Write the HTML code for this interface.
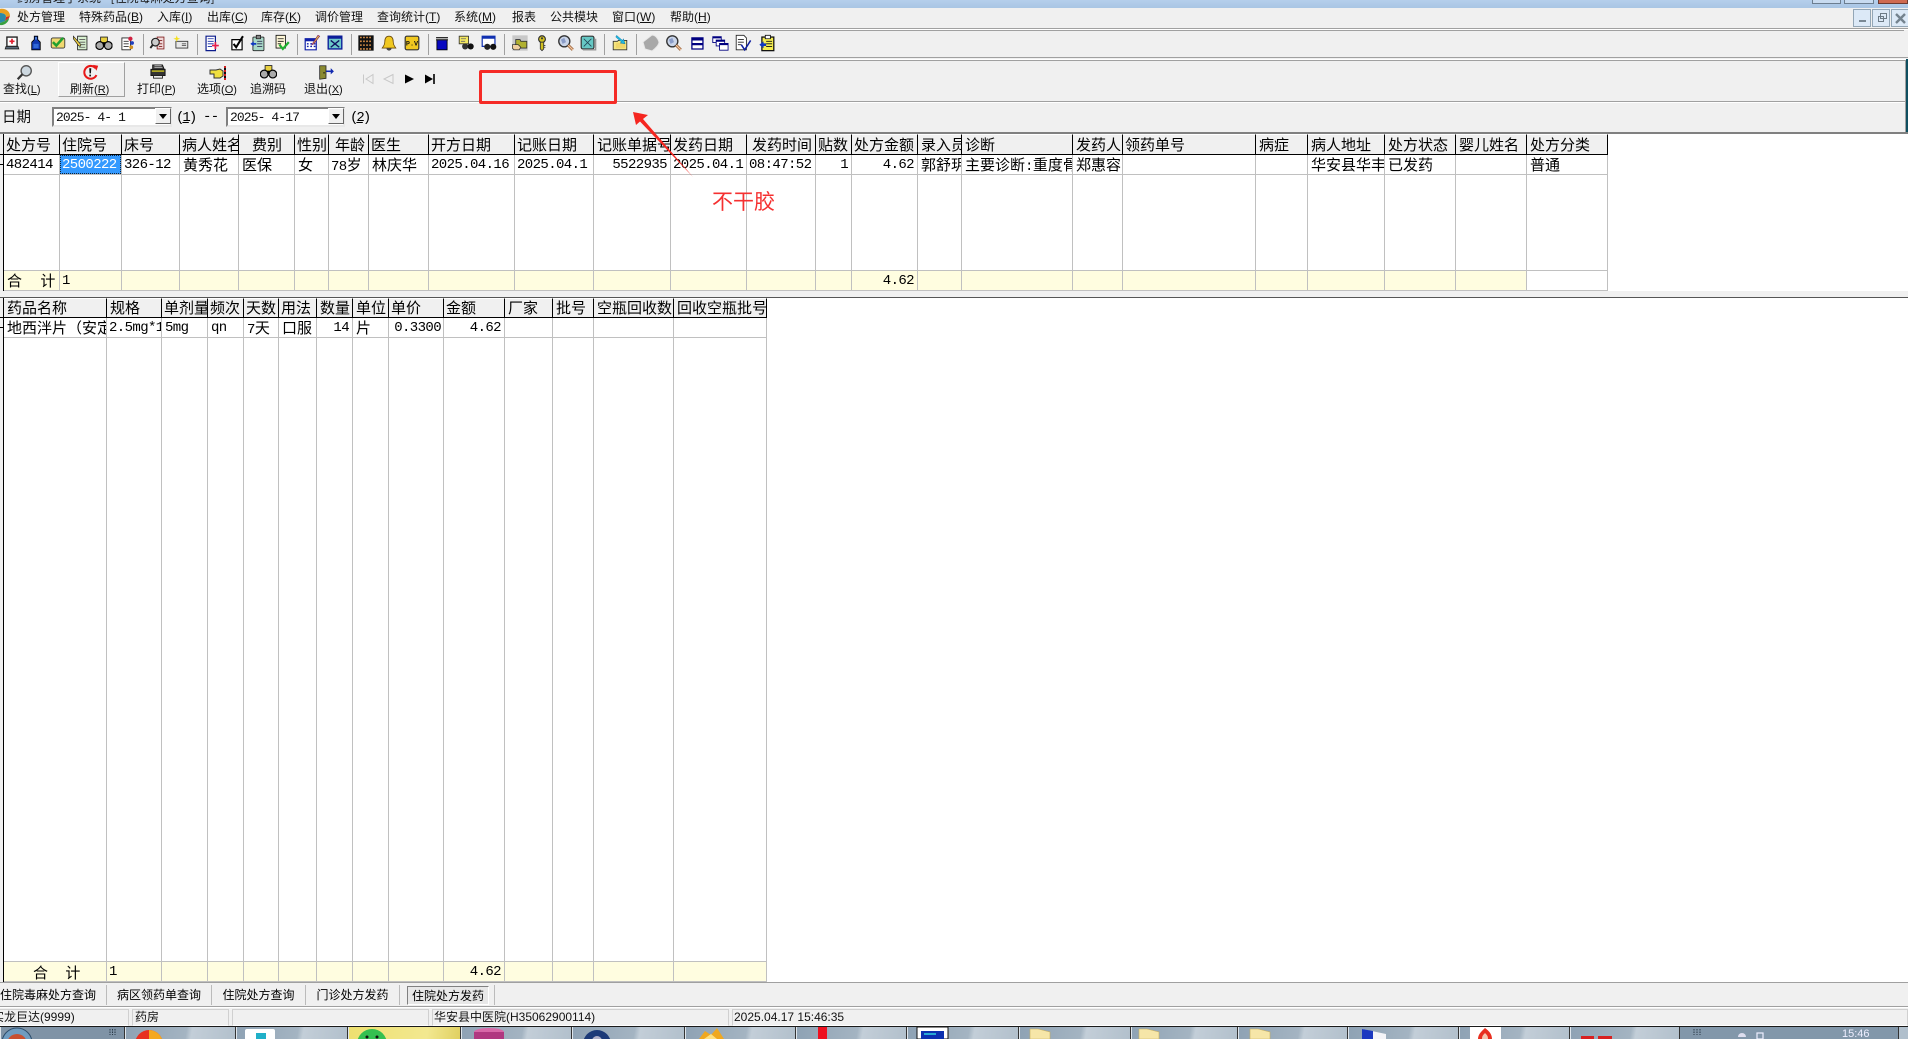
<!DOCTYPE html>
<html lang="zh"><head><meta charset="utf-8"><title>药房管理子系统</title>
<style>
html,body{margin:0;padding:0;background:#fff;width:1908px;height:1039px;overflow:hidden}
#r{position:relative;width:1908px;height:1039px;overflow:hidden;background:#fff;font:15px "WenQuanYi Zen Hei","Noto Sans CJK SC",sans-serif;color:#000}
#r div,#r span.a,#r svg.ic,#r svg.p{position:absolute}
u{text-decoration:underline}
.n{font:14px "Liberation Mono",monospace;letter-spacing:-.6px}
.m{top:7px;height:19px;line-height:19px;font-size:12px;white-space:nowrap;color:#111}
.m em{font:12px "Liberation Sans",sans-serif}
.ic{top:33px;width:20px;height:20px;transform:scale(.85)}
.l{background:#a0a0a0}
.b{background:#000}
.g{background:#c0c0c0}
.h,.c{overflow:hidden;white-space:nowrap;box-sizing:border-box;padding-left:2px}
.h{height:20px;line-height:20px;background:#f0f0f0;border-right:1px solid #000;border-top:1px solid #fff;font-size:15px;color:#000}
.h2{line-height:18px}
.c{height:19px;line-height:20px;font-size:15px;color:#000}
.c.n{font:14px/20px "Liberation Mono",monospace}
.rt{text-align:right;padding:0 3px 0 0}
.bt{font-size:12px;white-space:nowrap;height:15px;line-height:15px;color:#111}
.bt em{font:11px "Liberation Sans",sans-serif}
.tab{top:985px;height:20px;line-height:20px;font-size:12px;text-align:center;white-space:nowrap;overflow:hidden;border-right:1px solid #bbb;box-sizing:border-box}
.st{top:1009px;height:17px;line-height:14px;font:12px/14px "Liberation Sans","WenQuanYi Zen Hei",sans-serif;box-sizing:border-box;border:1px solid #d0d0d0;border-bottom-color:#fff;white-space:nowrap;overflow:hidden;padding-left:1px;color:#111}
.tb{top:1027px;height:12px;border-right:1px solid #333;border-left:1px solid #dfe6ec;box-sizing:border-box;background:linear-gradient(100deg,#8ea2b4 0%,#a4b4c2 55%,#c3ced8 60%,#b2c0cc 100%)}
.cb{background:#fff;box-sizing:border-box;border:2px solid;border-color:#808080 #e8e8e8 #e8e8e8 #808080;height:20px;top:107px;font:13px "Liberation Mono",monospace;letter-spacing:-.9px;line-height:17px;padding-left:2px;white-space:pre;color:#111}
.cbb{top:108px;width:16px;height:16px;background:#f0f0f0;border:1px solid;border-color:#fff #666 #666 #fff;box-sizing:border-box}
.cbb:after{content:"";position:absolute;left:3px;top:5px;border:4px solid transparent;border-top:5px solid #000;border-bottom:0}
.ctl{top:9px;width:18px;height:18px;background:#dce9f7;border:1px solid #93a6b6;box-sizing:border-box}
</style></head><body><div id="r">
<svg width="0" height="0" style="position:absolute"><defs>
<symbol id="mag" viewBox="0 0 20 20"><circle cx="8" cy="8" r="6.5" fill="#c9d4e8" stroke="#333" stroke-width="1.6"/><path d="M4 6 8 4l2 5-4 2z" fill="#8a9cc8"/><path d="M12.5 12.5 18 18" stroke="#a06840" stroke-width="3.4"/><path d="M12.5 12.5 18 18" stroke="#f4c8a0" stroke-width="1.4"/></symbol>
<symbol id="bino" viewBox="0 0 20 20"><path d="M6 3h8v7H6z" fill="#e8d040" stroke="#222"/><circle cx="5" cy="13" r="4.6" fill="#aaa" stroke="#000" stroke-width="1.4"/><circle cx="15" cy="13" r="4.6" fill="#aaa" stroke="#000" stroke-width="1.4"/><path d="M8.5 9h3v4h-3z" fill="#000"/></symbol>
</defs></svg>

<!-- chrome -->
<div style="left:0;top:0;width:1908px;height:134px;background:#f0f0f0"></div>
<div style="left:0;top:0;width:1908px;height:8px;background:linear-gradient(#b5cfec,#a9c5e4);overflow:hidden"><div style="left:17px;top:-10px;font-size:12px;line-height:16px;color:#1a1a1a;white-space:nowrap">药房管理子系统 - [住院毒麻处方查询]</div></div>
<div style="left:1812px;top:0;width:29px;height:4px;background:#c8dbf0;border:1px solid #6c7e90;border-top:0;box-sizing:border-box"></div>
<div style="left:1844px;top:0;width:30px;height:4px;background:#c8dbf0;border:1px solid #6c7e90;border-top:0;box-sizing:border-box"></div>
<div style="left:1878px;top:0;width:30px;height:4px;background:#cf6a50;border:1px solid #6c3a30;border-top:0;box-sizing:border-box"></div>

<svg class="p" style="left:0;top:8px" width="11" height="18" viewBox="0 0 11 18"><path d="M0 1C5 0 10 3 10 8L6 9C6 6 3 5 0 5z" fill="#e8a020"/><path d="M0 5C3 5 6 6 6 9L5 13 0 15z" fill="#2a8aa8"/><path d="M0 15 5 13 9 10C9 14 4 18 0 17z" fill="#38a040"/><path d="M6 9l4-1-1 2-4 3z" fill="#d03020"/></svg>

<div class="m" style="left:17px">处方管理</div>
<div class="m" style="left:79px">特殊药品<em>(<u>B</u>)</em></div>
<div class="m" style="left:157px">入库<em>(<u>I</u>)</em></div>
<div class="m" style="left:207px">出库<em>(<u>C</u>)</em></div>
<div class="m" style="left:261px">库存<em>(<u>K</u>)</em></div>
<div class="m" style="left:315px">调价管理</div>
<div class="m" style="left:377px">查询统计<em>(<u>T</u>)</em></div>
<div class="m" style="left:454px">系统<em>(<u>M</u>)</em></div>
<div class="m" style="left:512px">报表</div>
<div class="m" style="left:550px">公共模块</div>
<div class="m" style="left:612px">窗口<em>(<u>W</u>)</em></div>
<div class="m" style="left:670px">帮助<em>(<u>H</u>)</em></div>

<div class="ctl" style="left:1853px"><div style="left:5px;top:10px;width:7px;height:2px;background:#7a8894"></div></div>
<div class="ctl" style="left:1872px"><div style="left:5px;top:6px;width:6px;height:6px;border:1.5px solid #6c7a86;box-sizing:border-box;background:#dce9f7"></div><div style="left:7px;top:3px;width:7px;height:6px;border:1.5px solid #6c7a86;border-left-width:1px;box-sizing:border-box"></div></div>
<div class="ctl" style="left:1891px"><svg class="p" style="left:3px;top:3px" width="11" height="11"><path d="M1 1 10 10M10 1 1 10" stroke="#74838f" stroke-width="2.4"/></svg></div>

<div class="l" style="left:0;top:28px;width:1908px;height:1px"></div>
<div style="left:0;top:29px;width:1908px;height:1px;background:#fff"></div>
<div class="l" style="left:0;top:30px;width:1904px;height:1px"></div>
<div class="l" style="left:0;top:57px;width:1908px;height:1px"></div>
<div style="left:0;top:59px;width:1908px;height:1px;background:#fff"></div>
<div class="l" style="left:0;top:60px;width:1906px;height:1px"></div>
<div class="l" style="left:0;top:101px;width:1906px;height:1px"></div>
<div style="left:0;top:102px;width:1906px;height:1px;background:#fff"></div>
<div style="left:0;top:132px;width:1908px;height:2px;background:#808080"></div>
<div style="left:1906px;top:59px;width:2px;height:73px;background:#0f4f60"></div>
<div style="left:1905px;top:60px;width:1px;height:72px;background:#a0a0a0"></div>

<!-- toolbar separators -->
<div class="l" style="left:143px;top:34px;width:1px;height:21px"></div>
<div class="l" style="left:197px;top:34px;width:1px;height:21px"></div>
<div class="l" style="left:297px;top:34px;width:1px;height:21px"></div>
<div class="l" style="left:351px;top:34px;width:1px;height:21px"></div>
<div class="l" style="left:428px;top:34px;width:1px;height:21px"></div>
<div class="l" style="left:504px;top:34px;width:1px;height:21px"></div>
<div class="l" style="left:604px;top:34px;width:1px;height:21px"></div>
<div class="l" style="left:636px;top:34px;width:1px;height:21px"></div>

<!-- toolbar icons -->
<svg class="ic" style="left:2px" viewBox="0 0 20 20"><path d="M4 3h12v11H4z" fill="#fff" stroke="#222" stroke-width="1.6"/><path d="M9 5h2v2h2v2h-2v2H9V9H7V7h2z" fill="#e02030"/><path d="M3 14h14l1 3H2z" fill="#5a6a7a" stroke="#222"/></svg>
<svg class="ic" style="left:26px" viewBox="0 0 20 20"><path d="M8 2h4v4l3 3v9H5V9l3-3z" fill="#1038b0" stroke="#000"/><path d="M9 3h2v3H9z" fill="#5c8ce0"/><path d="M7 11h6v5H7z" fill="#3068d8"/></svg>
<svg class="ic" style="left:48px" viewBox="0 0 20 20"><rect x="2" y="4" width="16" height="12" rx="2" fill="#f0d870" stroke="#333"/><path d="M4 9l4 4 8-9" fill="none" stroke="#20a030" stroke-width="3"/></svg>
<svg class="ic" style="left:71px" viewBox="0 0 20 20"><path d="M6 2h11v16H6z" fill="#d8f0d0" stroke="#222"/><path d="M8 6h7M8 9h7M8 12h7M8 15h7" stroke="#555"/><path d="M1 2 10 12l-1 2-2-1L1 5z" fill="#f0d040" stroke="#222" stroke-width=".8"/></svg>
<svg class="ic" style="left:94px"><use href="#bino"/></svg>
<svg class="ic" style="left:117px" viewBox="0 0 20 20"><path d="M4 4h10v14H4z" fill="#fff" stroke="#222"/><path d="M6 8h6M6 11h6M6 14h6" stroke="#333"/><circle cx="14" cy="5" r="2.5" fill="#d02040"/><circle cx="16" cy="10" r="2.2" fill="#2040c0"/><circle cx="15" cy="15" r="2.2" fill="#d09020"/></svg>
<svg class="ic" style="left:148px" viewBox="0 0 20 20"><path d="M9 3h8v14H9z" fill="#f0d8d8" stroke="#802020"/><circle cx="7" cy="9" r="4.5" fill="#ccc" stroke="#222" stroke-width="1.4"/><path d="M4 12 1 16" stroke="#222" stroke-width="2.2"/><path d="M11 7h4M11 11h4M11 14h4" stroke="#802020"/></svg>
<svg class="ic" style="left:171px" viewBox="0 0 20 20"><path d="M4 8h14v8H4z" fill="#e8e8e8" stroke="#333"/><path d="M11 11h5M11 13h5" stroke="#555"/><path d="M5 1l1 3 3 1-3 1-1 3-1-3-3-1 3-1z" fill="#f4e020"/></svg>
<svg class="ic" style="left:202px" viewBox="0 0 20 20"><path d="M3 2h11v17H3z" fill="#fff" stroke="#0c1c8c" stroke-width="1.4"/><path d="M5 5h7M5 8h7M5 11h7M5 14h5" stroke="#1028a8"/><path d="M13 9h2v3h3v2h-3v3h-2v-3h-3v-2h3z" fill="#e8204c"/></svg>
<svg class="ic" style="left:227px" viewBox="0 0 20 20"><path d="M4 6h12v12H4z" fill="#fff" stroke="#000" stroke-width="1.4"/><path d="M6 11l3 4 8-13" fill="none" stroke="#000" stroke-width="2.4"/></svg>
<svg class="ic" style="left:248px" viewBox="0 0 20 20"><rect x="4" y="3" width="13" height="16" rx="1" fill="#a8d8c8" stroke="#222"/><path d="M8 1h5v4H8z" fill="#888" stroke="#222"/><path d="M9 8h6M9 11h6M9 14h6" stroke="#335"/><path d="M1 11l4-3v2h3v2H5v2z" fill="#1038c0"/></svg>
<svg class="ic" style="left:272px" viewBox="0 0 20 20"><path d="M3 1h11v15H3z" fill="#fff8d8" stroke="#111"/><path d="M5 5h7M5 8h7M5 11h4" stroke="#111"/><path d="M7 12l4 5 7-8" fill="none" stroke="#20b030" stroke-width="2.6"/></svg>
<svg class="ic" style="left:302px" viewBox="0 0 20 20"><path d="M2 5h13v13H2z" fill="#fff" stroke="#1020a8" stroke-width="1.4"/><path d="M2 5h13v3H2z" fill="#1020a8"/><path d="M4 11h2M8 11h2M12 11h2M4 14h2M8 14h2M12 14h2" stroke="#1020a8" stroke-width="1.6"/><path d="M17 1l2 1-7 9-2 1 1-2z" fill="#e8c840" stroke="#802060" stroke-width=".8"/></svg>
<svg class="ic" style="left:325px" viewBox="0 0 20 20"><path d="M2 2h16v15H2z" fill="#6cc8c8" stroke="#0c1c98" stroke-width="1.6"/><path d="M2 2h16v3H2z" fill="#0c1c98"/><path d="M5 7l10 8M15 7 5 15" stroke="#101060" stroke-width="1.6"/></svg>
<svg class="ic" style="left:356px" viewBox="0 0 20 20"><rect x="1" y="1" width="18" height="18" fill="#111"/><path d="M3 3.5h14M3 8h14M3 12.5h14M3 17h14" stroke="#d89048" stroke-width="1.8" stroke-dasharray="2 1.6"/></svg>
<svg class="ic" style="left:379px" viewBox="0 0 20 20"><path d="M10 2c4 0 5 3 5 7s2 5 3 7H2c1-2 3-3 3-7s1-7 5-7z" fill="#f0c820" stroke="#705010"/><path d="M7 16a3 3 0 0 0 6 0z" fill="#444"/></svg>
<svg class="ic" style="left:402px" viewBox="0 0 20 20"><rect x="2" y="2" width="16" height="16" rx="2" fill="#f0c820" stroke="#333" stroke-width="1.4"/><text x="10" y="13" font-size="8" font-family="Liberation Mono" text-anchor="middle" fill="#111" font-weight="bold">P.V</text></svg>
<svg class="ic" style="left:432px" viewBox="0 0 20 20"><path d="M4 6h12v12H4z" fill="#0808c0" stroke="#000"/><path d="M3 3h14v4H3z" fill="#222"/><path d="M1 5h18" stroke="#eee"/></svg>
<svg class="ic" style="left:456px" viewBox="0 0 20 20"><path d="M2 2h11v9H2z" fill="#f4e860" stroke="#333"/><circle cx="9" cy="14" r="3.6" fill="#333"/><circle cx="15.5" cy="14" r="3.6" fill="#111"/><path d="M4 5h6M4 8h5" stroke="#666"/></svg>
<svg class="ic" style="left:479px" viewBox="0 0 20 20"><path d="M2 2h15v12H2z" fill="#fff" stroke="#1030b0" stroke-width="1.4"/><path d="M2 2h15v3H2z" fill="#1030b0"/><circle cx="8" cy="14.5" r="3.6" fill="#222"/><circle cx="15" cy="14.5" r="3.6" fill="#111"/></svg>
<svg class="ic" style="left:510px" viewBox="0 0 20 20"><path d="M1 1h18v18H1z" fill="#c8c8c8"/><path d="M5 6h5l1 2h7v8H5z" fill="#b0b030" stroke="#333"/><path d="M1 12h7l3 3-2 3H3l-2-2z" fill="#f0d0a0" stroke="#222" stroke-width=".8"/></svg>
<svg class="ic" style="left:532px" viewBox="0 0 20 20"><circle cx="10" cy="5.5" r="4" fill="#d0c020" stroke="#333" stroke-width="1.4"/><circle cx="10" cy="4.5" r="1.2" fill="#333"/><path d="M8 9h4v8l-2 2-2-2z" fill="#d0c020" stroke="#333"/><path d="M12 13h2M12 15h2" stroke="#333"/></svg>
<svg class="ic" style="left:556px"><use href="#mag"/></svg>
<svg class="ic" style="left:578px" viewBox="0 0 20 20"><rect x="2" y="2" width="15" height="15" rx="2" fill="#66c8c4" stroke="#333" stroke-width="1.4"/><path d="M5 5l9 9M14 5l-9 9" stroke="#245"/><path d="M4 18h15V5" fill="none" stroke="#999" stroke-width="1.6"/></svg>
<svg class="ic" style="left:610px" viewBox="0 0 20 20"><path d="M2 8h5l1-1h10v11H2z" fill="#f6e680" stroke="#333"/><path d="M5 10h11v6H5z" fill="#f0d060" opacity=".7"/><path d="M6 1l7 6 1-2 2 6-6-1 2-1-7-6z" fill="#20b8e0" stroke="#0870a0" stroke-width=".5"/></svg>
<svg class="ic" style="left:641px;transform:none" viewBox="0 0 20 20"><path d="M2 9 11 2c3 0 6 3 7 7 0 3-4 7-7 9l-7-2z" fill="#a8a8a8" stroke="#e8e8e8"/></svg>
<svg class="ic" style="left:664px"><use href="#mag"/></svg>
<svg class="ic" style="left:687px" viewBox="0 0 20 20"><path d="M4 4h13v13H4z" fill="#fff" stroke="#000080" stroke-width="1.5"/><path d="M4 4h13v3H4zM4 10h13v2.600H4z" fill="#000080"/></svg>
<svg class="ic" style="left:710px" viewBox="0 0 20 20"><g fill="#fff" stroke="#000080"><path d="M1.500 2.500h10v7h-10z"/><path d="M5.500 6.500h10v7h-10z"/><path d="M9.500 10.500h10v8h-10z"/></g><path d="M1.500 2.500h10v2h-10zM5.500 6.500h10v2h-10zM9.500 10.500h10v2h-10z" fill="#000080"/></svg>
<svg class="ic" style="left:733px" viewBox="0 0 20 20"><path d="M2 1h9l3 3v14H2z" fill="#fff" stroke="#222"/><path d="M4 6h7M4 9h7M4 12h4" stroke="#222"/><path d="M8 12l4 6 7-11" fill="none" stroke="#1020a0" stroke-width="1.800"/></svg>
<svg class="ic" style="left:757px" viewBox="0 0 20 20"><rect x="4" y="3" width="14" height="16" fill="#f6ee50" stroke="#111" stroke-width="1.500"/><path d="M8 1h6v4H8z" fill="#fff" stroke="#111"/><path d="M9 8h7M9 11h7M9 14h7" stroke="#111"/><path d="M1 12l5-4v2.500h3v3H6V16z" fill="#1038c0"/></svg>

<!-- big buttons -->
<div style="left:58px;top:62px;width:67px;height:35px;box-sizing:border-box;border:1px solid;border-color:#fff #a0a0a0 #a0a0a0 #fff"></div>
<svg class="p" style="left:15px;top:64px" width="19" height="17" viewBox="0 0 22 20"><circle cx="13" cy="8" r="6" fill="#cdd8e0" stroke="#555" stroke-width="1.600"/><path d="M8.500 12 3 18" stroke="#333" stroke-width="2.600"/></svg>
<svg class="p" style="left:82px;top:64px" width="17" height="17" viewBox="0 0 20 20"><path d="M16 5A7.500 7.500 0 1 0 17 13" fill="none" stroke="#e81818" stroke-width="2.400"/><path d="M13 1l6 1-2 6z" fill="#e81818"/><path d="M8.500 5h2.400l-.4 6h-1.600zM8.600 12.500h2v2h-2z" fill="#111"/></svg>
<svg class="p" style="left:149px;top:64px" width="18" height="16" viewBox="0 0 20 18"><path d="M4 1h11l2 5H4z" fill="#444" stroke="#111"/><path d="M6 2h8M6 4h9" stroke="#ddd" stroke-width=".8"/><path d="M2 6h16v7H2z" fill="#333" stroke="#111"/><path d="M3 8h14" stroke="#c8c020" stroke-width="1.600"/><path d="M5 13h10v3H5z" fill="#e8e8e8" stroke="#222"/></svg>
<svg class="p" style="left:209px;top:65px" width="18" height="16" viewBox="0 0 18 16"><path d="M1 5h6l4-1 3 2v5l-3 2H5V9H1z" fill="#f0e040" stroke="#333"/><path d="M16 1v2M16 5v2M16 9v2M16 13v2" stroke="#d02020" stroke-width="2"/><path d="M16 3v2M16 7v2M16 11v2" stroke="#111" stroke-width="2"/></svg>
<svg class="p" style="left:260px;top:63px;width:17px;height:17px"><use href="#bino"/></svg>
<svg class="p" style="left:318px;top:65px" width="16" height="15" viewBox="0 0 20 19"><path d="M2 1h8v16l-8 1z" fill="#8a8a30" stroke="#222"/><circle cx="7.500" cy="10" r=".9" fill="#111"/><path d="M10 7l6-.1V4l4 4-4 3.800V9l-6-.1z" fill="#1028b0"/></svg>
<div class="bt" style="left:3px;top:81px">查找<em>(<u>L</u>)</em></div>
<div class="bt" style="left:70px;top:81px">刷新<em>(<u>R</u>)</em></div>
<div class="bt" style="left:137px;top:81px">打印<em>(<u>P</u>)</em></div>
<div class="bt" style="left:197px;top:81px">选项<em>(<u>O</u>)</em></div>
<div class="bt" style="left:250px;top:81px">追溯码</div>
<div class="bt" style="left:304px;top:81px">退出<em>(<u>X</u>)</em></div>
<svg class="p" style="left:362px;top:73px" width="74" height="12" viewBox="0 0 74 12"><g fill="#f0f0f0" stroke="#c8c8c8"><path d="M1.500 1.500v9"/><path d="M11 1.500 4 6l7 4.500z"/><path d="M31 1.500 22 6l9 4.500z"/></g><path d="M43 1.500 52 6l-9 4.500z" fill="#000"/><path d="M63 1.500 71 6l-8 4.500z" fill="#000"/><path d="M72 1v10" stroke="#000" stroke-width="1.600"/></svg>

<!-- date row -->
<div style="left:2px;top:107px;font-size:14.5px;line-height:20px;color:#111">日期</div>
<div class="cb" style="left:52px;width:120px">2025- 4- 1</div><div class="cbb" style="left:155px"></div>
<div class="n" style="left:176px;top:109px;line-height:18px;letter-spacing:-2px">(<u>1</u>)</div>
<div class="n" style="left:203px;top:108px;line-height:18px">--</div>
<div class="cb" style="left:226px;width:119px">2025- 4-17</div><div class="cbb" style="left:328px"></div>
<div class="n" style="left:350px;top:109px;line-height:18px;letter-spacing:-2px">(<u>2</u>)</div>

<!-- top grid -->
<div style="left:0;top:134px;width:3px;height:157px;background:#f0f0f0"></div>
<div class="b" style="left:3px;top:134px;width:1px;height:157px"></div>
<div class="b" style="left:0;top:164px;width:3px;height:1px"></div>
<div class="h" style="top:134px;left:4px;width:56px">处方号</div>
<div class="h" style="top:134px;left:60px;width:62px">住院号</div>
<div class="h" style="top:134px;left:122px;width:58px">床号</div>
<div class="h" style="top:134px;left:180px;width:59px">病人姓名</div>
<div class="h" style="top:134px;left:239px;width:56px;padding-left:13px">费别</div>
<div class="h" style="top:134px;left:295px;width:34px">性别</div>
<div class="h" style="top:134px;left:329px;width:40px;padding-left:6px">年龄</div>
<div class="h" style="top:134px;left:369px;width:60px">医生</div>
<div class="h" style="top:134px;left:429px;width:86px">开方日期</div>
<div class="h" style="top:134px;left:515px;width:79px">记账日期</div>
<div class="h" style="top:134px;left:594px;width:77px;padding-left:3px">记账单据号</div>
<div class="h" style="top:134px;left:671px;width:76px">发药日期</div>
<div class="h" style="top:134px;left:747px;width:69px;padding-left:5px">发药时间</div>
<div class="h" style="top:134px;left:816px;width:36px">贴数</div>
<div class="h" style="top:134px;left:852px;width:66px">处方金额</div>
<div class="h" style="top:134px;left:918px;width:44px;padding-left:3px">录入员</div>
<div class="h" style="top:134px;left:962px;width:111px;padding-left:3px">诊断</div>
<div class="h" style="top:134px;left:1073px;width:50px;padding-left:3px">发药人</div>
<div class="h" style="top:134px;left:1123px;width:133px">领药单号</div>
<div class="h" style="top:134px;left:1256px;width:52px;padding-left:3px">病症</div>
<div class="h" style="top:134px;left:1308px;width:77px;padding-left:3px">病人地址</div>
<div class="h" style="top:134px;left:1385px;width:71px;padding-left:3px">处方状态</div>
<div class="h" style="top:134px;left:1456px;width:71px;padding-left:3px">婴儿姓名</div>
<div class="h" style="top:134px;left:1527px;width:81px;padding-left:3px">处方分类</div>
<div class="b" style="left:0;top:154px;width:1608px;height:1px"></div>

<div style="left:4px;top:271px;width:1523px;height:19px;background:#fffde0"></div>
<div class="g" style="left:4px;top:174px;width:1604px;height:1px"></div>
<div class="g" style="left:4px;top:270px;width:1604px;height:1px"></div>
<div class="g" style="left:4px;top:290px;width:1604px;height:1px"></div>
<div class="g" style="top:155px;height:136px;width:1px;left:59px"></div><div class="g" style="top:155px;height:136px;width:1px;left:121px"></div><div class="g" style="top:155px;height:136px;width:1px;left:179px"></div><div class="g" style="top:155px;height:136px;width:1px;left:238px"></div><div class="g" style="top:155px;height:136px;width:1px;left:294px"></div><div class="g" style="top:155px;height:136px;width:1px;left:328px"></div><div class="g" style="top:155px;height:136px;width:1px;left:368px"></div><div class="g" style="top:155px;height:136px;width:1px;left:428px"></div><div class="g" style="top:155px;height:136px;width:1px;left:514px"></div><div class="g" style="top:155px;height:136px;width:1px;left:593px"></div><div class="g" style="top:155px;height:136px;width:1px;left:670px"></div><div class="g" style="top:155px;height:136px;width:1px;left:746px"></div><div class="g" style="top:155px;height:136px;width:1px;left:815px"></div><div class="g" style="top:155px;height:136px;width:1px;left:851px"></div><div class="g" style="top:155px;height:136px;width:1px;left:917px"></div><div class="g" style="top:155px;height:136px;width:1px;left:961px"></div><div class="g" style="top:155px;height:136px;width:1px;left:1072px"></div><div class="g" style="top:155px;height:136px;width:1px;left:1122px"></div><div class="g" style="top:155px;height:136px;width:1px;left:1255px"></div><div class="g" style="top:155px;height:136px;width:1px;left:1307px"></div><div class="g" style="top:155px;height:136px;width:1px;left:1384px"></div><div class="g" style="top:155px;height:136px;width:1px;left:1455px"></div><div class="g" style="top:155px;height:136px;width:1px;left:1526px"></div><div class="g" style="top:155px;height:136px;width:1px;left:1607px"></div>

<div class="c n" style="top:155px;left:4px;width:55px">482414</div>
<div class="c n" style="top:155px;left:60px;width:61px;background:#3399ff;color:#fff;outline:1px dotted #123;outline-offset:-1px;padding-left:2px">2500222</div>
<div class="c n" style="top:155px;left:122px;width:57px;padding-left:2px">326-12</div>
<div class="c" style="top:155px;left:180px;width:58px;padding-left:3px">黄秀花</div>
<div class="c" style="top:155px;left:239px;width:55px;padding-left:3px">医保</div>
<div class="c" style="top:155px;left:295px;width:33px;padding-left:3px">女</div>
<div class="c" style="top:155px;left:329px;width:39px;padding-left:2px"><span class="n">78</span>岁</div>
<div class="c" style="top:155px;left:369px;width:59px;padding-left:3px">林庆华</div>
<div class="c n" style="top:155px;left:429px;width:85px;padding-left:2px">2025.04.16</div>
<div class="c n" style="top:155px;left:515px;width:78px;padding-left:2px">2025.04.1</div>
<div class="c n rt" style="top:155px;left:594px;width:76px">5522935</div>
<div class="c n" style="top:155px;left:671px;width:75px">2025.04.1</div>
<div class="c n" style="top:155px;left:747px;width:68px;padding-left:2px">08:47:52</div>
<div class="c n rt" style="top:155px;left:816px;width:35px">1</div>
<div class="c n rt" style="top:155px;left:852px;width:65px">4.62</div>
<div class="c" style="top:155px;left:918px;width:43px;padding-left:3px">郭舒玥</div>
<div class="c" style="top:155px;left:962px;width:110px;padding-left:3px">主要诊断<span class="n">:</span>重度骨</div>
<div class="c" style="top:155px;left:1073px;width:49px;padding-left:3px">郑惠容</div>
<div class="c" style="top:155px;left:1308px;width:76px;padding-left:3px">华安县华丰</div>
<div class="c" style="top:155px;left:1385px;width:70px;padding-left:3px">已发药</div>
<div class="c" style="top:155px;left:1527px;width:80px;padding-left:3px">普通</div>
<div class="c" style="top:271px;left:7px;width:50px;padding:0;word-spacing:15px">合 计</div>
<div class="c n" style="top:271px;left:60px;width:40px">1</div>
<div class="c n rt" style="top:271px;left:852px;width:65px">4.62</div>

<!-- splitter -->
<div style="left:0;top:291px;width:1908px;height:6px;background:#f0f0f0"></div>
<div class="b" style="left:0;top:297px;width:1908px;height:1px;background:#555"></div>

<!-- bottom grid -->
<div style="left:0;top:298px;width:3px;height:684px;background:#f0f0f0"></div>
<div class="b" style="left:3px;top:298px;width:1px;height:684px"></div>
<div class="b" style="left:0;top:327px;width:3px;height:1px"></div>
<div class="h h2" style="top:298px;left:4px;width:103px;padding-left:3px">药品名称</div>
<div class="h h2" style="top:298px;left:107px;width:55px;padding-left:3px">规格</div>
<div class="h h2" style="top:298px;left:162px;width:46px">单剂量</div>
<div class="h h2" style="top:298px;left:208px;width:36px">频次</div>
<div class="h h2" style="top:298px;left:244px;width:35px">天数</div>
<div class="h h2" style="top:298px;left:279px;width:38px;padding-left:2px">用法</div>
<div class="h h2" style="top:298px;left:317px;width:36px;padding-left:3px">数量</div>
<div class="h h2" style="top:298px;left:353px;width:36px;padding-left:3px">单位</div>
<div class="h h2" style="top:298px;left:389px;width:55px">单价</div>
<div class="h h2" style="top:298px;left:444px;width:61px">金额</div>
<div class="h h2" style="top:298px;left:505px;width:48px;padding-left:3px">厂家</div>
<div class="h h2" style="top:298px;left:553px;width:41px;padding-left:3px">批号</div>
<div class="h h2" style="top:298px;left:594px;width:80px;padding-left:3px">空瓶回收数</div>
<div class="h h2" style="top:298px;left:674px;width:93px;padding-left:3px">回收空瓶批号</div>
<div class="b" style="left:0;top:317px;width:767px;height:1px"></div>

<div style="left:4px;top:962px;width:763px;height:19px;background:#fffde0"></div>
<div class="g" style="left:4px;top:337px;width:763px;height:1px"></div>
<div class="g" style="left:4px;top:961px;width:763px;height:1px"></div>
<div class="g" style="left:4px;top:981px;width:763px;height:1px"></div>
<div class="g" style="top:318px;height:664px;width:1px;left:106px"></div><div class="g" style="top:318px;height:664px;width:1px;left:161px"></div><div class="g" style="top:318px;height:664px;width:1px;left:207px"></div><div class="g" style="top:318px;height:664px;width:1px;left:243px"></div><div class="g" style="top:318px;height:664px;width:1px;left:278px"></div><div class="g" style="top:318px;height:664px;width:1px;left:316px"></div><div class="g" style="top:318px;height:664px;width:1px;left:352px"></div><div class="g" style="top:318px;height:664px;width:1px;left:388px"></div><div class="g" style="top:318px;height:664px;width:1px;left:443px"></div><div class="g" style="top:318px;height:664px;width:1px;left:504px"></div><div class="g" style="top:318px;height:664px;width:1px;left:552px"></div><div class="g" style="top:318px;height:664px;width:1px;left:593px"></div><div class="g" style="top:318px;height:664px;width:1px;left:673px"></div><div class="g" style="top:318px;height:664px;width:1px;left:766px"></div>

<div class="c" style="top:318px;left:4px;width:102px;padding-left:3px">地西泮片（安定片）</div>
<div class="c n" style="top:318px;left:107px;width:54px;padding-left:2px">2.5mg*10</div>
<div class="c n" style="top:318px;left:162px;width:45px;padding-left:3px">5mg</div>
<div class="c n" style="top:318px;left:208px;width:35px;padding-left:3px">qn</div>
<div class="c" style="top:318px;left:244px;width:34px;padding-left:3px"><span class="n">7</span>天</div>
<div class="c" style="top:318px;left:279px;width:37px;padding-left:3px">口服</div>
<div class="c n rt" style="top:318px;left:317px;width:35px">14</div>
<div class="c" style="top:318px;left:353px;width:35px;padding-left:3px">片</div>
<div class="c n rt" style="top:318px;left:389px;width:54px;padding-right:2px">0.3300</div>
<div class="c n rt" style="top:318px;left:444px;width:60px">4.62</div>
<div class="c" style="top:963px;left:33px;width:60px;padding:0;word-spacing:14px">合 计</div>
<div class="c n" style="top:962px;left:107px;width:40px">1</div>
<div class="c n rt" style="top:962px;left:444px;width:60px">4.62</div>

<!-- tabs -->
<div style="left:0;top:982px;width:1908px;height:45px;background:#f0f0f0"></div>
<div class="l" style="left:0;top:982px;width:1908px;height:1px"></div>
<div class="tab" style="left:0;width:107px;text-align:left">住院毒麻处方查询</div>
<div class="tab" style="left:107px;width:105px">病区领药单查询</div>
<div class="tab" style="left:212px;width:94px">住院处方查询</div>
<div class="tab" style="left:306px;width:94px">门诊处方发药</div>
<div class="tab" style="left:407px;width:82px;top:986px;background:#e8e8e8;border:1px solid;border-color:#808080 #fff #fff #808080;height:19px;line-height:18px">住院处方发药</div>
<div class="l" style="left:494px;top:985px;width:1px;height:20px;background:#bbb"></div>

<!-- status -->
<div class="l" style="left:0;top:1006px;width:1908px;height:1px"></div>
<div style="left:0;top:1007px;width:1908px;height:1px;background:#fff"></div>
<div class="st" style="left:-1px;width:130px;text-indent:-9px">实龙巨达(9999)</div>
<div class="st" style="left:132px;width:97px;padding-left:2px">药房</div>
<div class="st" style="left:232px;width:197px"></div>
<div class="st" style="left:432px;width:297px">华安县中医院(H35062900114)</div>
<div class="st" style="left:732px;width:1176px">2025.04.17 15:46:35</div>

<!-- taskbar -->
<div style="left:0;top:1026px;width:1908px;height:13px;background:#8ea2b4;border-top:1px solid #1a1a1a;box-sizing:border-box"></div>
<div class="tb" style="left:0;width:125px;background:#7f93a6"></div>
<div class="tb" style="left:125px;width:111px"></div><div class="tb" style="left:236px;width:112px"></div>
<div class="tb" style="left:348px;width:113px;background:linear-gradient(100deg,#eee070,#f2e890 70%,#e0d060)"></div>
<div class="tb" style="left:461px;width:111px"></div><div class="tb" style="left:572px;width:113px"></div><div class="tb" style="left:685px;width:111px"></div><div class="tb" style="left:796px;width:111px"></div><div class="tb" style="left:907px;width:112px"></div><div class="tb" style="left:1019px;width:112px"></div><div class="tb" style="left:1131px;width:107px"></div><div class="tb" style="left:1238px;width:110px"></div><div class="tb" style="left:1348px;width:111px"></div><div class="tb" style="left:1459px;width:111px"></div><div class="tb" style="left:1570px;width:110px"></div>
<div style="left:1680px;top:1027px;width:218px;height:12px;background:#8297aa"></div>
<div style="left:1898px;top:1027px;width:10px;height:12px;background:#b0bfcc;border-left:1px solid #333;box-sizing:border-box"></div>
<div style="left:1842px;top:1027px;font:11px 'Liberation Sans',sans-serif;color:#eef;line-height:14px">15:46</div>

<svg class="p" style="left:0;top:1027px" width="1908" height="12" viewBox="0 0 1908 12">
<circle cx="17" cy="16" r="15" fill="#6f9cc0" stroke="#2c4c6a"/><circle cx="17" cy="17" r="10" fill="#c85030"/>
<path d="M110 2v6M112.500 2v6M115 2v6M1694 2v6M1697 2v6M1700 2v6" stroke="#2a3a48" stroke-dasharray="1.500 1"/>
<circle cx="149" cy="17" r="14" fill="#e83020"/><path d="M149 3a14 14 0 0 1 14 14h-14z" fill="#f4a820"/>
<rect x="245" y="2" width="30" height="14" rx="2" fill="#fff"/><rect x="256" y="6" width="10" height="6" fill="#20b0c8"/>
<circle cx="372" cy="17" r="15" fill="#34c050"/><circle cx="367" cy="10" r="1.500" fill="#111"/><circle cx="377" cy="10" r="1.500" fill="#111"/>
<ellipse cx="489" cy="5" rx="15" ry="4" fill="#d868a8"/><path d="M474 5h30v8h-30z" fill="#b03880"/>
<circle cx="597" cy="17" r="14" fill="#1c3a78"/><circle cx="597" cy="14" r="5" fill="#b0b0c8"/>
<path d="M699 12l6-8 6 4 6-7 7 11z" fill="#f0a820"/><path d="M704 12l7-5 6 5z" fill="#ffe080"/>
<rect x="818" y="0" width="9" height="12" fill="#ee1020"/>
<rect x="917" y="0" width="31" height="12" fill="#fff" stroke="#111"/><rect x="921" y="4" width="23" height="8" fill="#0c30b0"/><path d="M924 7h12" stroke="#30d0e0" stroke-width="1.500"/>
<path d="M1030 2h8l12 3v7h-20z" fill="#f6e6a8" stroke="#c8b060" stroke-width=".6"/><path d="M1139 2h8l12 3v7h-20z" fill="#f6e6a8" stroke="#c8b060" stroke-width=".6"/><path d="M1250 2h8l12 3v7h-20z" fill="#f6e6a8" stroke="#c8b060" stroke-width=".6"/>
<path d="M1362 2l24 5v5h-24z" fill="#f4f4f8"/><path d="M1362 2l11 2v8h-11z" fill="#1c38c0"/>
<rect x="1470" y="0" width="31" height="12" fill="#fff"/><path d="M1485 1c4 3 7 6 7 11h-14c0-5 4-8 7-11z" fill="#e83020"/><path d="M1485 6c2 2 3 3 3 6h-6c0-3 1-4 3-6z" fill="#f4c8b0"/>
<path d="M1581 9h13v3h-13zM1598 9h14v3h-14z" fill="#d82020"/>
<path d="M1738 10a4 4 0 0 1 8 0z" fill="#dde"/><rect x="1757" y="6" width="6" height="6" fill="none" stroke="#eef" stroke-width="1.200"/>
</svg>

<!-- annotation -->
<div style="left:479px;top:70px;width:138px;height:34px;box-sizing:border-box;border:3px solid #f52b26;border-radius:2px"></div>
<svg class="p" style="left:0;top:0;pointer-events:none" width="1908" height="300"><polygon points="633,112 648,115 643,119 693,177 640,121.500 636,125" fill="#f52620"/></svg>
<div style="left:712px;top:187px;font-size:21px;line-height:28px;color:#f53030;white-space:nowrap">不干胶</div>
</div></body></html>
